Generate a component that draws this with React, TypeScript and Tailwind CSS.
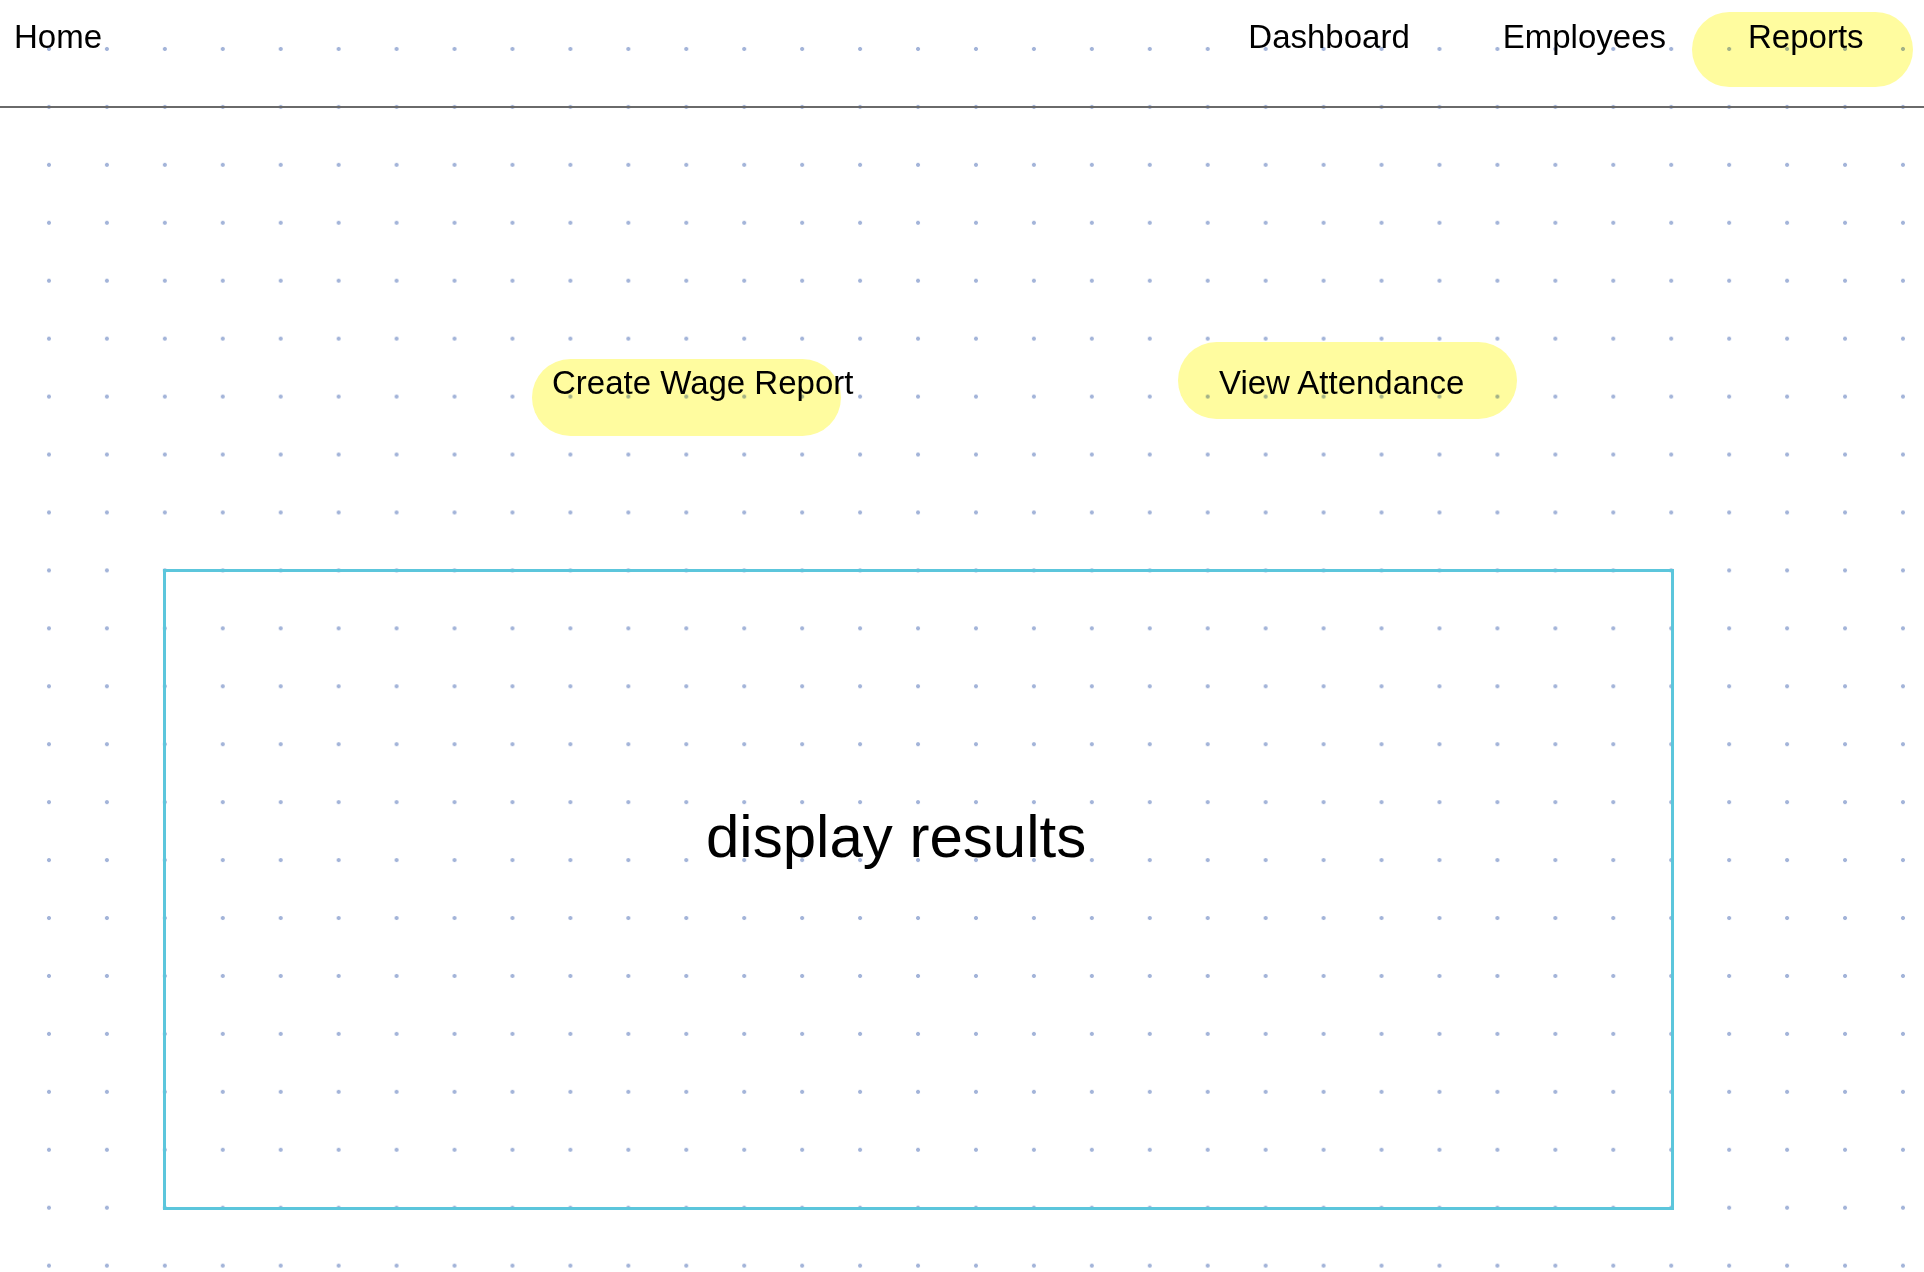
const navText = "text-[33px] leading-none text-black whitespace-nowrap"

function Pill({ label, className }: { label: string; className: string }) {
  return (
    <div className={`rounded-full bg-[#fffc9f] mix-blend-multiply ${className}`}>
      <span className={navText}>{label}</span>
    </div>
  )
}

export default function App() {
  return (
    <div className="min-h-screen w-full bg-white bg-[radial-gradient(circle,#a3b4d9_1.7px,transparent_2.3px)] bg-[length:57.94px_57.94px] bg-[position:20px_20px] font-['Liberation_Sans',Arial,sans-serif] text-black">
      <header className="flex h-[108px] items-start border-b-2 border-[#6a6a6a]">
        <span className={`${navText} ml-[14px] mt-[20px]`}>Home</span>
        <nav className="ml-auto flex items-start pr-[11px]">
          <span className={`${navText} mt-[20px]`}>Dashboard</span>
          <span className={`${navText} ml-[93px] mt-[20px]`}>Employees</span>
          <Pill label="Reports" className="ml-[26px] mt-[12px] h-[75px] w-[221px] pl-[56px] pt-[8px]" />
        </nav>
      </header>

      <main className="flex flex-col">
        <div className="flex items-start">
          <Pill label="Create Wage Report" className="ml-[532px] mt-[251px] h-[77px] w-[309px] pl-[20px] pt-[7px]" />
          <Pill label="View Attendance" className="ml-[337px] mt-[234px] h-[77px] w-[339px] pl-[41px] pt-[24px]" />
        </div>

        <section className="ml-[163px] mt-[133px] h-[641px] w-[1511px] border-[3px] border-[#5cc6dc] pl-[540px] pt-[235px]">
          <p className="text-[60px] leading-none whitespace-nowrap">display results</p>
        </section>
      </main>
    </div>
  )
}
